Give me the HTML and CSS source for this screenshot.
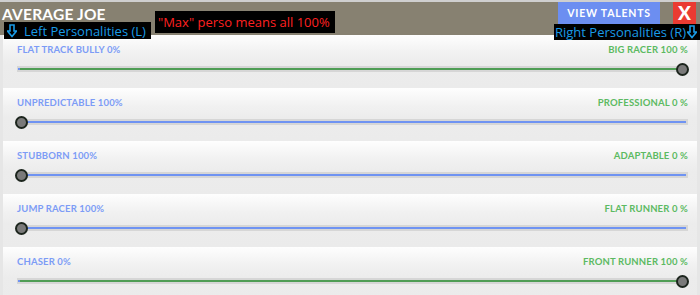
FILE: index.html
```html
<!DOCTYPE html>
<html>
<head>
<meta charset="utf-8">
<link rel="stylesheet" href="styles.css">
</head>
<body>
<div class="app">
  <header class="header">
    <h1 class="title">AVERAGE JOE</h1>
    <div class="actions">
      <button class="btn-talents">VIEW TALENTS</button>
      <button class="btn-close">X</button>
    </div>
  </header>
  <div class="note note-max">"Max" perso means all 100%</div>
  <div class="note note-left"><svg class="arrow" viewBox="0 0 10 14" width="10" height="14"><path d="M3 1 H7 V7 H9.5 L5 12.5 L0.5 7 H3 Z" fill="none" stroke="#1a9be6" stroke-width="1.6" stroke-linejoin="miter"/></svg>Left Personalities (L)</div>
  <div class="note note-right">Right Personalities (R)<svg class="arrow" viewBox="0 0 10 14" width="10" height="14"><path d="M3 1 H7 V7 H9.5 L5 12.5 L0.5 7 H3 Z" fill="none" stroke="#1a9be6" stroke-width="1.6" stroke-linejoin="miter"/></svg></div>
  <main class="panel">
    <section class="row">
      <div class="labels"><span class="left">FLAT TRACK BULLY 0%</span><span class="right">BIG RACER 100 %</span></div>
      <div class="track"><div class="fill" style="width:100%"></div><div class="thumb" style="left:100%"></div></div>
    </section>
    <section class="row">
      <div class="labels"><span class="left">UNPREDICTABLE 100%</span><span class="right">PROFESSIONAL 0 %</span></div>
      <div class="track"><div class="fill" style="width:0%"></div><div class="thumb" style="left:0%"></div></div>
    </section>
    <section class="row">
      <div class="labels"><span class="left">STUBBORN 100%</span><span class="right">ADAPTABLE 0 %</span></div>
      <div class="track"><div class="fill" style="width:0%"></div><div class="thumb" style="left:0%"></div></div>
    </section>
    <section class="row">
      <div class="labels"><span class="left">JUMP RACER 100%</span><span class="right">FLAT RUNNER 0 %</span></div>
      <div class="track"><div class="fill" style="width:0%"></div><div class="thumb" style="left:0%"></div></div>
    </section>
    <section class="row">
      <div class="labels"><span class="left">CHASER 0%</span><span class="right">FRONT RUNNER 100 %</span></div>
      <div class="track"><div class="fill" style="width:100%"></div><div class="thumb" style="left:100%"></div></div>
    </section>
  </main>
</div>
</body>
</html>
```
FILE: styles.css
```css
* { box-sizing: border-box; }
html, body { margin: 0; padding: 0; }
body {
  width: 700px;
  height: 295px;
  overflow: hidden;
  background: #e6e6e6;
  font-family: "Lato", "Open Sans", sans-serif;
}
.app { position: relative; width: 700px; height: 295px; }
.header {
  height: 35px;
  background: #878171;
  border-top: 2px solid #cfcfcf;
  display: flex;
  justify-content: space-between;
  align-items: flex-start;
  padding: 0 4px 0 2px;
}
.title {
  margin: 3px 0 0 0;
  font-size: 15.5px;
  font-weight: 700;
  color: #ffffff;
  letter-spacing: 0.2px;
}
.actions { display: flex; gap: 13px; }
.btn-talents {
  width: 102px;
  height: 22px;
  border: none;
  background: #6c8ef1;
  color: #ffffff;
  font-family: "Lato", sans-serif;
  font-weight: 700;
  font-size: 10.5px;
  letter-spacing: 0.8px;
  padding: 0;
}
.btn-close {
  width: 23px;
  height: 22px;
  border: none;
  background: #ea3b32;
  color: #ffffff;
  font-family: "Lato", sans-serif;
  font-weight: 900;
  font-size: 19px;
  padding: 0;
  line-height: 22px;
}
.note {
  position: absolute;
  background: #000000;
  font-family: "Open Sans", "Noto Sans", sans-serif;
  font-size: 13px;
  display: flex;
  align-items: center;
  white-space: nowrap;
}
.note-max {
  left: 155px; top: 11px; width: 180px; height: 22px;
  color: #ff2020;
  padding-left: 3px;
}
.note-left {
  left: 4px; top: 22px; height: 17px;
  color: #1a9be6;
  padding: 0 5px 0 3px;
  gap: 7px;
}
.note-right {
  left: 554px; top: 24px; width: 146px; height: 16px;
  color: #1a9be6;
  padding-left: 1px;
  gap: 1px;
}
.arrow { flex: none; }
.panel {
  padding: 0 3px;
}
.row {
  height: 53px;
  background: linear-gradient(#fefefe 0px, #f1f1f1 18px, #ececec 30px, #ebebeb 53px);
  padding: 9px 9px 0 14px;
}
.labels {
  display: flex;
  justify-content: space-between;
  font-size: 9.5px;
  font-weight: 700;
  letter-spacing: 0.15px;
  line-height: 12px;
}
.left { color: #7c9cf6; }
.right { color: #5cba62; }
.track {
  position: relative;
  margin-top: 10px;
  height: 6px;
  background: #d6d6d6;
}
.track::before {
  content: "";
  position: absolute;
  left: 1px; right: 2px; top: 2px;
  height: 2px;
  background: #6f93f2;
}
.fill {
  position: absolute;
  left: 3px;
  top: 2px;
  height: 2px;
  max-width: calc(100% - 5px);
  background: #4f9d55;
}
.thumb {
  position: absolute;
  top: 3px;
  width: 13px;
  height: 13px;
  margin-left: -7px;
  margin-top: -6.5px;
  border-radius: 50%;
  background: #7a7a7a;
  border: 2px solid #1c251d;
}
.row:nth-child(2) .thumb, .row:nth-child(3) .thumb, .row:nth-child(4) .thumb { margin-left: -2px; }
.row:nth-child(1) .thumb, .row:nth-child(5) .thumb { margin-left: -12px; }
```
